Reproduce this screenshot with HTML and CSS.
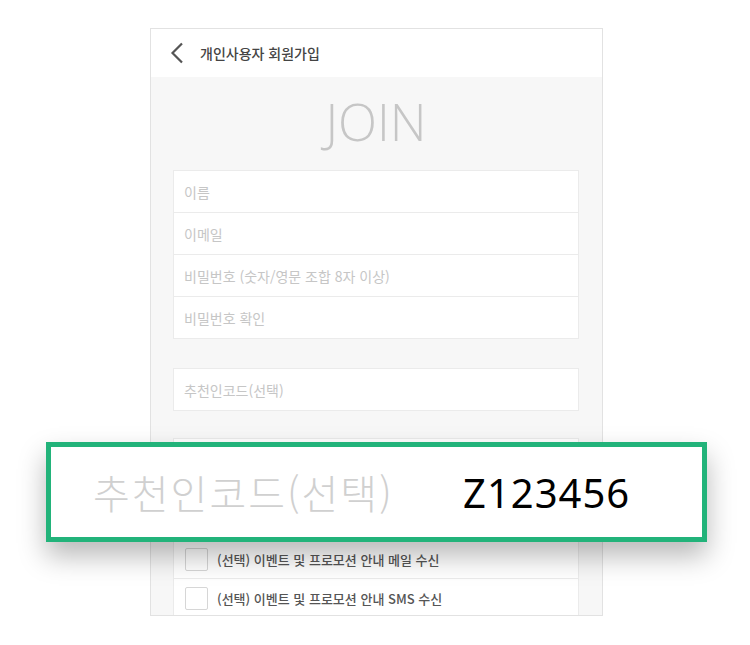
FILE: index.html
```html
<!DOCTYPE html>
<html lang="ko">

<head>
    <meta charset="utf-8">
    <meta name="viewport" content="width=device-width, initial-scale=1">
    <title>개인사용자 회원가입</title>
    <link rel="stylesheet" href="styles.css">
</head>

<body>
    <div class="phone">
        <!-- Top bar -->
        <div class="topbar">
            <svg class="back" width="14" height="22" viewBox="0 0 14 22">
                <path d="M12 1.5 L2.5 11 L12 20.5" fill="none" stroke="#555" stroke-width="2.2"/>
            </svg>
            <span class="title">개인사용자 회원가입</span>
        </div>

        <div class="content">
            <h1>JOIN</h1>

            <div class="group">
                <input class="field" type="text" placeholder="이름">
                <input class="field" type="text" placeholder="이메일">
                <input class="field" type="password" placeholder="비밀번호 (숫자/영문 조합 8자 이상)">
                <input class="field" type="password" placeholder="비밀번호 확인">
            </div>

            <div class="group single">
                <input class="field" type="text" placeholder="추천인코드(선택)">
            </div>

            <!-- Agreements (top rows sit under the callout) -->
            <div class="group terms">
                <div class="check first"></div>
                <div class="check"></div>
                <div class="check"><span class="box"></span>(선택) 이벤트 및 프로모션 안내 메일 수신</div>
                <div class="check"><span class="box"></span>(선택) 이벤트 및 프로모션 안내 SMS 수신</div>
            </div>
        </div>
    </div>

    <!-- Zoomed referral field -->
    <div class="callout">
        <span class="callout-label">추천인코드(선택)</span>
        <span class="callout-value">Z123456</span>
    </div>
</body>

</html>
```

FILE: styles.css
```css
body {
    margin: 0;
    width: 750px;
    height: 645px;
    background-color: #fff;
    font-family: "Noto Sans CJK KR", "Noto Sans", sans-serif;
    position: relative;
    overflow: hidden;
}

.phone {
    margin: 28px 0 0 150px;
    width: 451px;
    height: 586px;
    border: 1px solid #e2e2e2;
    background-color: #f7f7f7;
    overflow: hidden;
}

/* Top bar */
.topbar {
    height: 48px;
    background-color: #fff;
    display: flex;
    align-items: center;
    padding-left: 19px;
}

.back {
    margin-right: 16px;
}

.title {
    font-size: 14px;
    font-weight: 500;
    color: #444;
}

.content {
    padding: 14px 23px 0 22px;
}

h1 {
    margin: 0 0 19px 0;
    font-family: "Open Sans", sans-serif;
    font-weight: 300;
    font-size: 51px;
    line-height: 60px;
    color: #c6c6c6;
    text-align: center;
}

/* Input groups */
.group {
    background-color: #fff;
    border: 1px solid #ebebeb;
    display: flex;
    flex-direction: column;
}

.single {
    margin-top: 29px;
}

.field {
    height: 41px;
    border: none;
    border-bottom: 1px solid #ebebeb;
    padding: 0 10px;
    margin: 0;
    font-family: inherit;
    font-size: 14px;
    outline: none;
    background: transparent;
}

.field:last-child {
    border-bottom: none;
}

.field::placeholder {
    color: #c6c6c6;
}

/* Agreements */
.terms {
    margin-top: 27px;
}

.check {
    height: 38px;
    display: flex;
    align-items: center;
    padding-left: 11px;
    border-bottom: 1px solid #ebebeb;
    font-size: 13px;
    font-weight: 500;
    color: #555;
}

.check.first {
    height: 61px;
}

.check:last-child {
    border-bottom: none;
}

.box {
    width: 21px;
    height: 21px;
    border: 1px solid #d6d6d6;
    border-radius: 2px;
    background-color: #fff;
    margin-right: 9px;
}

/* Zoomed callout over the form */
.callout {
    position: absolute;
    left: 46px;
    top: 442px;
    width: 651px;
    height: 90px;
    border: 5px solid #22b37a;
    background-color: #fff;
    box-shadow: 0 14px 26px rgba(0, 0, 0, 0.28);
    display: flex;
    align-items: center;
}

.callout-label {
    margin-left: 42px;
    width: 370px;
    font-size: 40px;
    font-weight: 300;
    letter-spacing: 2px;
    color: #d0d0d0;
}

.callout-value {
    font-family: "Noto Sans", sans-serif;
    font-size: 40px;
    letter-spacing: 1px;
    color: #000;
}
```
